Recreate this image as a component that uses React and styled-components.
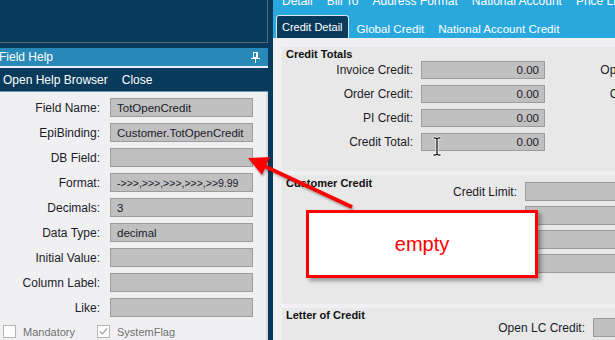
import styled, { createGlobalStyle } from 'styled-components';

const GlobalStyle = createGlobalStyle`
  html, body {
    margin: 0;
    padding: 0;
    overflow: hidden;
    background: #083b5b;
  }
  * {
    box-sizing: border-box;
  }
`;

const helpFields = [
  { label: 'Field Name:', value: 'TotOpenCredit' },
  { label: 'EpiBinding:', value: 'Customer.TotOpenCredit' },
  { label: 'DB Field:', value: '' },
  { label: 'Format:', value: '->>>,>>>,>>>,>>>,>>9.99', small: true },
  { label: 'Decimals:', value: '3' },
  { label: 'Data Type:', value: 'decimal' },
  { label: 'Initial Value:', value: '' },
  { label: 'Column Label:', value: '' },
  { label: 'Like:', value: '' },
];

const navLinks = ['Detail', 'Bill To', 'Address Format', 'National Account', 'Price Lists'];
const tabs = ['Credit Detail', 'Global Credit', 'National Account Credit'];

const totals = [
  { label: 'Invoice Credit:', value: '0.00', side: 'Open Orders:' },
  { label: 'Order Credit:', value: '0.00', side: 'Credit Hold:' },
  { label: 'PI Credit:', value: '0.00', side: '' },
  { label: 'Credit Total:', value: '0.00', side: '' },
];

const App = () => {
  return (
    <Page>
      <GlobalStyle />
      <LeftPane>
        <Dock />
        <TitleBar>
          <span>Field Help</span>
          <svg width="9" height="11" viewBox="0 0 9 11">
            <rect x="2.5" y="0.5" width="4" height="5" fill="none" stroke="#fff" />
            <rect x="5" y="1" width="1" height="4.5" fill="#fff" />
            <line x1="0" y1="6.5" x2="9" y2="6.5" stroke="#fff" />
            <line x1="4.5" y1="7" x2="4.5" y2="11" stroke="#fff" />
          </svg>
        </TitleBar>
        <MenuBar>
          <MenuItem>Open Help Browser</MenuItem>
          <MenuItem>Close</MenuItem>
        </MenuBar>
        <HelpBody>
          <HelpGrid>
            {helpFields.map((f) => (
              <Row key={f.label}>
                <Label>{f.label}</Label>
                <Input $small={f.small}>{f.value}</Input>
              </Row>
            ))}
          </HelpGrid>
          <CheckRow>
            <CheckItem>
              <Box />
              <span>Mandatory</span>
            </CheckItem>
            <CheckItem>
              <Box>
                <svg width="11" height="11" viewBox="0 0 11 11">
                  <path d="M2 5.5 L4.5 8 L9 2.5" fill="none" stroke="#a8a8a8" strokeWidth="1.3" />
                </svg>
              </Box>
              <span>SystemFlag</span>
            </CheckItem>
          </CheckRow>
        </HelpBody>
      </LeftPane>

      <RightPane>
        <Header>
          <NavRow>
            {navLinks.map((n) => (
              <NavItem key={n}>{n}</NavItem>
            ))}
          </NavRow>
          <TabRow>
            {tabs.map((t, i) => (
              <Tab key={t} $active={i === 0}>{t}</Tab>
            ))}
          </TabRow>
        </Header>
        <Content>
          <Group>
            <GroupTitle>Credit Totals</GroupTitle>
            <TotalsGrid>
              {totals.map((t) => (
                <Row key={t.label}>
                  <Label>{t.label}</Label>
                  <Input $right>{t.value}</Input>
                  <Label>{t.side}</Label>
                </Row>
              ))}
            </TotalsGrid>
          </Group>

          <Group $side $bottom={31}>
            <GroupTitle $width={100} $top={1}>Customer Credit</GroupTitle>
            <SideFields $labelWidth={131} $top={7}>
              <Row>
                <Label>Credit Limit:</Label>
                <Input />
              </Row>
              <Row>
                <Label />
                <Input />
              </Row>
              <Row>
                <Label />
                <Input />
              </Row>
              <Row>
                <Label />
                <Input />
              </Row>
            </SideFields>
          </Group>

          <Group $side $grow>
            <GroupTitle $width={100}>Letter of Credit</GroupTitle>
            <SideFields $labelWidth={199} $top={10}>
              <Row>
                <Label>Open LC Credit:</Label>
                <Input />
              </Row>
            </SideFields>
          </Group>
        </Content>
      </RightPane>

      <Arrow width="615" height="340" viewBox="0 0 615 340">
        <line x1="352" y1="207" x2="262" y2="165" stroke="#ff0000" strokeWidth="4" />
        <polygon points="248,158 270,157 262,175" fill="#ff0000" />
      </Arrow>
      <Callout>empty</Callout>
      <Cursor width="10" height="21" viewBox="0 0 10 21">
        <path
          d="M1 1h3l1 1 1-1h3v2H6v15h3v2H6l-1-1-1 1H1v-2h3V3H1z"
          fill="#000"
          stroke="#fff"
          strokeWidth="0.8"
        />
      </Cursor>
    </Page>
  );
};

export default App;

const Page = styled.div`
  position: relative;
  width: 615px;
  height: 340px;
  display: flex;
  gap: 5px;
  overflow: hidden;
  background: #083b5b;
  font-family: 'Liberation Sans', Arial, sans-serif;
  font-size: 12px;
  color: #1b1b28;
`;

const LeftPane = styled.div`
  width: 268px;
  flex: none;
  display: flex;
  flex-direction: column;
`;

const Dock = styled.div`
  height: 43px;
  flex: none;
  border-right: 1px solid #5a6977;
  border-bottom: 1px solid #5a6977;
`;

const TitleBar = styled.div`
  margin-top: 5px;
  height: 20px;
  flex: none;
  display: flex;
  align-items: center;
  justify-content: space-between;
  padding: 0 8px 0 0;
  background: #2888b8;
  border-bottom: 2px solid #e6f0f6;
  color: #fff;

  span {
    margin-left: -1px;
  }
`;

const MenuBar = styled.div`
  height: 24px;
  flex: none;
  display: flex;
  align-items: center;
  gap: 14px;
  padding-left: 3px;
  background: #083b5b;
  border-bottom: 1px solid #6f97b3;
`;

const MenuItem = styled.span`
  color: #fff;
`;

const HelpBody = styled.div`
  flex: 1;
  background: #f0f0f3;
  border-right: 2px solid #d6d9e0;
  padding-top: 6px;
`;

const HelpGrid = styled.div`
  display: grid;
  grid-template-columns: 100px 143px;
  grid-auto-rows: 19px;
  column-gap: 10px;
  row-gap: 6px;
`;

const Row = styled.div`
  display: contents;
`;

const Label = styled.div`
  display: flex;
  align-items: center;
  justify-content: flex-end;
  white-space: nowrap;
`;

const Input = styled.div`
  display: flex;
  align-items: center;
  justify-content: ${(p) => (p.$right ? 'flex-end' : 'flex-start')};
  padding: ${(p) => (p.$right ? '0 5px 1px 0' : '0 0 0 6px')};
  background: #c0c0c0;
  border: 1px solid #9c9c9c;
  font-size: ${(p) => (p.$small ? '10.5px' : '11.5px')};
  white-space: nowrap;
  overflow: hidden;
`;

const CheckRow = styled.div`
  display: flex;
  gap: 22px;
  margin-top: 8px;
  padding-left: 3px;
  font-size: 11px;
  color: #707070;
`;

const CheckItem = styled.div`
  display: flex;
  align-items: center;
  gap: 7px;
`;

const Box = styled.div`
  width: 13px;
  height: 13px;
  display: flex;
  align-items: center;
  justify-content: center;
  background: #fff;
  border: 1px solid #b4b4b4;
`;

const RightPane = styled.div`
  width: 520px;
  flex: none;
  display: flex;
  flex-direction: column;
`;

const Header = styled.div`
  height: 38px;
  flex: none;
  background: #29a8de;
  color: #fff;
`;

const NavRow = styled.div`
  height: 12px;
  display: flex;
  gap: 14px;
  padding-left: 9px;
  overflow: hidden;
`;

const NavItem = styled.span`
  margin-top: -6px;
  line-height: 14px;
  white-space: nowrap;
`;

const TabRow = styled.div`
  height: 26px;
  display: flex;
  align-items: flex-end;
  gap: 2px;
  padding-left: 3px;
`;

const Tab = styled.div`
  height: ${(p) => (p.$active ? '23px' : '20px')};
  display: flex;
  align-items: center;
  padding: ${(p) => (p.$active ? '0 5px 1px' : '0 6px')};
  font-size: ${(p) => (p.$active ? '11px' : '11.6px')};
  white-space: nowrap;
  background: ${(p) => (p.$active ? '#083b5b' : 'transparent')};
  border: ${(p) => (p.$active ? '1px solid #d4e8f3' : 'none')};
  border-bottom: none;
  border-radius: 3px 3px 0 0;
`;

const Content = styled.div`
  flex: 1;
  display: flex;
  flex-direction: column;
  gap: 4px;
  padding: 9px 0 0 9px;
  background: #f0f0f2;
`;

const Group = styled.div`
  width: 480px;
  display: flex;
  flex-direction: ${(p) => (p.$side ? 'row' : 'column')};
  align-items: flex-start;
  flex: ${(p) => (p.$grow ? '1' : 'none')};
  padding: 0 0 ${(p) => (p.$bottom ?? 20)}px 4px;
  background: #e8e8e8;
  border-radius: 3px;
`;

const GroupTitle = styled.div`
  width: ${(p) => (p.$width ? `${p.$width}px` : 'auto')};
  flex: none;
  margin-top: ${(p) => p.$top ?? 0}px;
  line-height: 14px;
  font-size: 11px;
  font-weight: bold;
  color: #111;
  white-space: nowrap;
`;

const TotalsGrid = styled.div`
  display: grid;
  grid-template-columns: 127px 124px 120px;
  grid-auto-rows: 18px;
  column-gap: 8px;
  row-gap: 6px;
`;

const SideFields = styled.div`
  display: grid;
  grid-template-columns: ${(p) => p.$labelWidth}px 140px;
  grid-auto-rows: 19px;
  column-gap: 8px;
  row-gap: 5px;
  margin-top: ${(p) => p.$top}px;
`;

const Arrow = styled.svg`
  position: absolute;
  left: 0;
  top: 0;
  pointer-events: none;
  filter: drop-shadow(1px 2px 1px rgba(0, 0, 0, 0.3));
`;

const Callout = styled.div`
  position: absolute;
  left: 306px;
  top: 210px;
  width: 232px;
  height: 68px;
  display: flex;
  align-items: center;
  justify-content: center;
  background: #fff;
  border: 3px solid #ff0000;
  box-shadow: 3px 3px 4px rgba(0, 0, 0, 0.35);
  color: #ff0000;
  font-size: 20px;
`;

const Cursor = styled.svg`
  position: absolute;
  left: 432px;
  top: 136px;
`;
